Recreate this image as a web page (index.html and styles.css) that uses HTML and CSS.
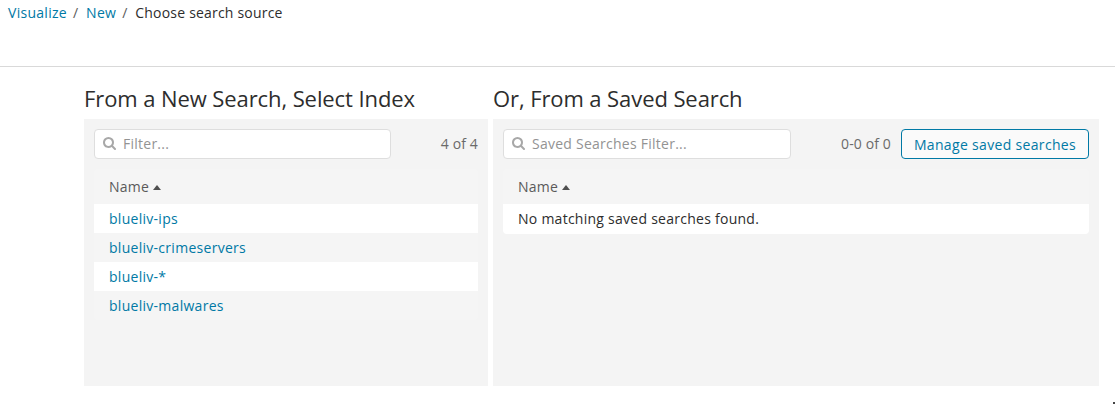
FILE: index.html
```html
<!DOCTYPE html>
<html lang="en">
<head>
<meta charset="utf-8">
<title>Choose search source</title>
<link rel="stylesheet" href="styles.css">
</head>
<body>
<header class="topbar">
  <nav class="breadcrumbs"><a href="#">Visualize</a><span class="sep">/</span><a href="#">New</a><span class="sep">/</span><span class="current">Choose search source</span></nav>
</header>
<main class="columns">
  <section class="column column-index">
    <h2>From a New Search, Select Index</h2>
    <div class="panel">
      <div class="toolbar">
        <label class="filter"><svg class="search" viewBox="0 0 1664 1664"><path d="M1152 704q0-185-131.500-316.500T704 256 387.500 387.500 256 704t131.500 316.500T704 1152t316.500-131.500T1152 704zm512 832q0 52-38 90t-90 38q-54 0-90-38l-343-342q-179 124-399 124-143 0-273.500-55.500t-225-150-150-225T0 704t55.500-273.500 150-225 225-150T704 0t273.500 55.500 225 150 150 225T1408 704q0 220-124 399l343 343q37 37 37 90z"/></svg><input type="text" placeholder="Filter..."></label>
        <span class="count">4 of 4</span>
      </div>
      <div class="list">
        <div class="head">Name<i class="caret"></i></div>
        <a class="item" href="#">blueliv-ips</a>
        <a class="item" href="#">blueliv-crimeservers</a>
        <a class="item" href="#">blueliv-*</a>
        <a class="item" href="#">blueliv-malwares</a>
      </div>
    </div>
  </section>
  <section class="column column-saved">
    <h2>Or, From a Saved Search</h2>
    <div class="panel">
      <div class="toolbar">
        <label class="filter"><svg class="search" viewBox="0 0 1664 1664"><path d="M1152 704q0-185-131.500-316.500T704 256 387.500 387.500 256 704t131.500 316.500T704 1152t316.500-131.500T1152 704zm512 832q0 52-38 90t-90 38q-54 0-90-38l-343-342q-179 124-399 124-143 0-273.500-55.500t-225-150-150-225T0 704t55.500-273.500 150-225 225-150T704 0t273.500 55.500 225 150 150 225T1408 704q0 220-124 399l343 343q37 37 37 90z"/></svg><input type="text" placeholder="Saved Searches Filter..."></label>
        <span class="count">0-0 of 0</span>
        <button class="manage" type="button">Manage saved searches</button>
      </div>
      <div class="list">
        <div class="head">Name<i class="caret"></i></div>
        <div class="item empty">No matching saved searches found.</div>
      </div>
    </div>
  </section>
</main>
<i class="corner"></i>
</body>
</html>
```

FILE: styles.css
```css
* { box-sizing: border-box; }
body { position: relative; margin: 0; height: 404px; overflow: hidden; background: #fff; color: #2d2d2d; font: 14px/20px "Open Sans", sans-serif; letter-spacing: .28px; }
a { color: #0079a5; text-decoration: none; }
.topbar { height: 67px; border-bottom: 1px solid #d9d9d9; padding: 3px 8px; }
.breadcrumbs { display: flex; letter-spacing: .28px; }
.sep { padding: 0 8px 0 6px; color: #5a5a5a; letter-spacing: 0; }
.current { letter-spacing: .2px; }
.columns { display: flex; gap: 5px; padding: 17px 16px 0 84px; }
.column-index { width: 404px; }
.column-saved { width: 606px; }
h2 { margin: 0; font-size: 22px; font-weight: 400; line-height: 28px; height: 35px; letter-spacing: -.09px; }
.panel { height: 267px; padding: 10px; background: #f4f4f4; }
.toolbar { display: flex; align-items: center; height: 30px; }
.filter { display: flex; align-items: center; width: 297px; height: 30px; padding: 0 8px; border: 1px solid #dedede; border-radius: 4px; background: #fff; }
.column-saved .filter { width: 288px; }
.search { flex: none; width: 13px; height: 13px; margin: -1px 7px 0 0; fill: #a8a8a8; }
input { flex: 1; min-width: 0; padding: 0; border: 0; outline: 0; background: none; font: inherit; letter-spacing: .25px; }
input::placeholder { color: #939393; opacity: 1; }
.count { margin-left: auto; color: #6a6a6a; letter-spacing: .13px; }
.manage { width: 188px; height: 30px; margin-left: 10px; padding: 2px 0 0; border: 1px solid #0079a5; border-radius: 4px; background: #fafafa; color: #0079a5; font: inherit; letter-spacing: .33px; }
.list { margin-top: 10px; background: #f5f5f5; border-radius: 4px; }
.head { display: flex; align-items: center; height: 35px; padding: 1px 15px 0; color: #5a5a5a; letter-spacing: .2px; }
.caret { margin: 0 0 0 4px; border: 4px solid transparent; border-top: 0; border-bottom: 5px solid #4f4f4f; }
.item { display: block; height: 29px; padding: 5px 15px 4px; }
.item:nth-child(even) { background: #fff; }
.empty { height: 30px; border-radius: 0 0 4px 4px; letter-spacing: .26px; }
.corner { position: absolute; right: 0; bottom: 0; width: 2px; height: 2px; background: #444; }
```
